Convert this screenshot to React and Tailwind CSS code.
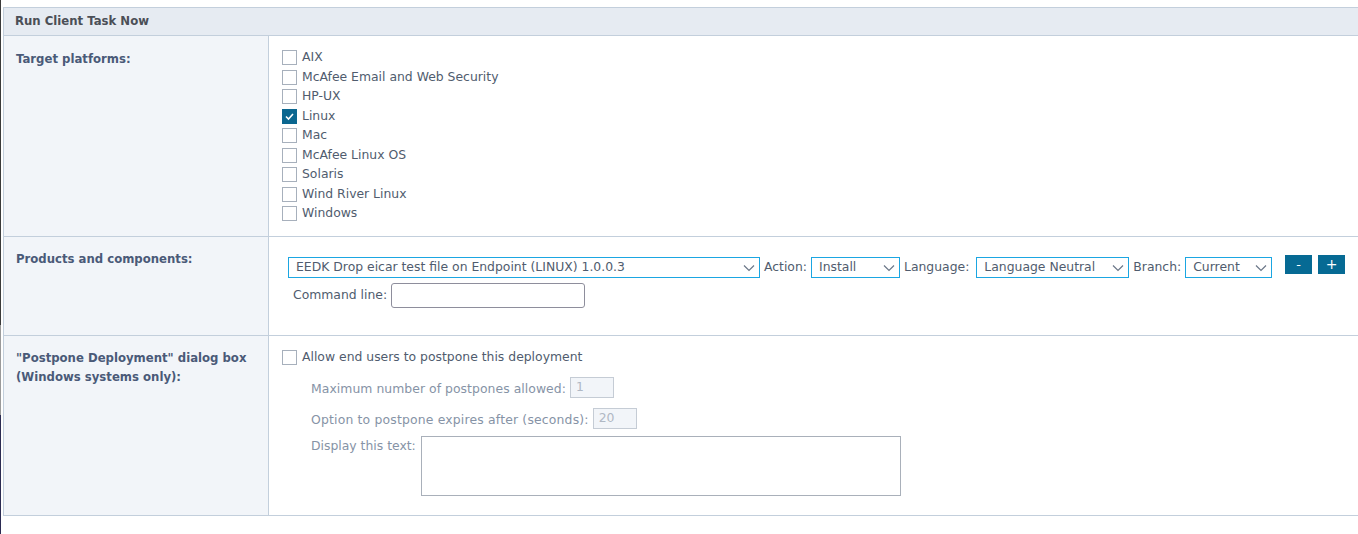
import React from "react";

const font = { fontFamily: '"DejaVu Sans", Verdana, sans-serif' };

function Box({ checked }) {
  return checked ? (
    <span className="flex h-[15px] w-[15px] shrink-0 items-center justify-center bg-[#0b6790]">
      <svg width="11" height="11" viewBox="0 0 11 11">
        <path d="M2 5.5 L4.5 8 L9 3" fill="none" stroke="#fff" strokeWidth="1.6" />
      </svg>
    </span>
  ) : (
    <span className="h-[15px] w-[15px] shrink-0 border border-[#a7b0bc] bg-white" />
  );
}

function Chevron() {
  return (
    <svg width="12" height="8" viewBox="0 0 12 8" className="shrink-0">
      <path d="M1 1.5 L6 6.5 L11 1.5" fill="none" stroke="#6b7788" strokeWidth="1.2" />
    </svg>
  );
}

function Select({ text, w }) {
  return (
    <div className={`flex h-[21px] items-center justify-between border border-[#1ba6e2] bg-white pl-[7px] pr-[4px] ${w}`}>
      <span className="whitespace-nowrap">{text}</span>
      <Chevron />
    </div>
  );
}

const platforms = [
  "AIX",
  "McAfee Email and Web Security",
  "HP-UX",
  "Linux",
  "Mac",
  "McAfee Linux OS",
  "Solaris",
  "Wind River Linux",
  "Windows",
];

export default function App() {
  return (
    <div className="flex h-[534px] w-[1358px] overflow-hidden bg-white text-[12.4px] text-[#505c6e]" style={font}>
      <div className="flex w-px flex-col">
        <div className="h-[325px] bg-[#3a3a3a]" />
        <div className="h-[90px] bg-[#9a9a9a]" />
        <div className="flex-1 bg-[#2b2b52]" />
      </div>
      <div className="ml-[2px] flex-1 pt-[7px]">
        <div className="border-l border-t border-[#c3cfdc]">
          <div className="flex h-[28px] items-center border-b border-[#c3cfdc] bg-[#e6ebf2] pl-[11px] text-[11.7px] font-bold text-[#4b4f57]">
            Run Client Task Now
          </div>

          <div className="grid grid-cols-[265px_1fr]">
            {/* Row 1 */}
            <div className="h-[201px] border-b border-r border-[#c3cfdc] bg-[#f2f5f9] pl-[12px] pt-[15px] text-[11.7px] font-bold text-[#4a5a78]">
              Target platforms:
            </div>
            <div className="h-[201px] border-b border-[#c3cfdc] pl-[13px] pt-[12px]">
              <div className="flex flex-col">
                {platforms.map((p) => (
                  <div key={p} className="flex h-[19.5px] items-center gap-[5px]">
                    <Box checked={p === "Linux"} />
                    <span>{p}</span>
                  </div>
                ))}
              </div>
            </div>

            {/* Row 2 */}
            <div className="h-[99px] border-b border-r border-[#c3cfdc] bg-[#f2f5f9] pl-[12px] pt-[14px] text-[11.7px] font-bold text-[#4a5a78]">
              Products and components:
            </div>
            <div className="h-[99px] border-b border-[#c3cfdc] pl-[19px] pt-[18px]">
              <div className="flex items-start">
                <div className="flex items-center gap-[4px] pt-[2px]">
                  <Select text="EEDK Drop eicar test file on Endpoint (LINUX) 1.0.0.3" w="w-[472px]" />
                  <span>Action:</span>
                  <Select text="Install" w="w-[89px]" />
                  <span>Language:</span>
                  <Select text="Language Neutral" w="ml-[3px] w-[153px]" />
                  <span>Branch:</span>
                  <Select text="Current" w="w-[87px]" />
                </div>
                <div className="ml-[13px] flex gap-[6px]">
                  <button className="flex h-[19px] w-[27px] items-center justify-center bg-[#066a94] text-[13px] text-white">-</button>
                  <button className="flex h-[19px] w-[27px] items-center justify-center bg-[#066a94] text-[14px] text-white">+</button>
                </div>
              </div>
              <div className="mt-[5px] flex items-center gap-[4px] pl-[5px]">
                <span>Command line:</span>
                <div className="h-[25px] w-[194px] rounded-[3px] border border-[#8e8e9c] bg-white" />
              </div>
            </div>

            {/* Row 3 */}
            <div className="h-[180px] border-b border-r border-[#c3cfdc] bg-[#f2f5f9] pl-[12px] pt-[13px] text-[11.7px] font-bold leading-[19px] text-[#4a5a78]">
              "Postpone Deployment" dialog box
              <br />
              (Windows systems only):
            </div>
            <div className="h-[180px] border-b border-[#c3cfdc] pl-[13px] pt-[12px]">
              <div className="flex h-[17px] items-center gap-[5px] pt-[1px]">
                <Box />
                <span>Allow end users to postpone this deployment</span>
              </div>
              <div className="pl-[29px] text-[#8693a6]">
                <div className="mt-[11px] flex items-center gap-[4px]">
                  <span className="pt-[4px] tracking-[0.05px]">Maximum number of postpones allowed:</span>
                  <div className="flex h-[21px] w-[44px] items-center border border-[#c5ccd5] bg-[#f2f5f9] pl-[5px] text-[#b0b8c4]">1</div>
                </div>
                <div className="mt-[9px] flex items-center gap-[4px]">
                  <span className="pt-[3px] tracking-[0.18px]">Option to postpone expires after (seconds):</span>
                  <div className="flex h-[21px] w-[44px] items-center border border-[#c5ccd5] bg-[#f2f5f9] pl-[5px] text-[#b0b8c4]">20</div>
                </div>
                <div className="mt-[7px] flex items-start gap-[5px]">
                  <span className="pt-[1px]">Display this text:</span>
                  <div className="h-[60px] w-[480px] border border-[#a9b0ba] bg-white" />
                </div>
              </div>
            </div>
          </div>
        </div>
      </div>
    </div>
  );
}
